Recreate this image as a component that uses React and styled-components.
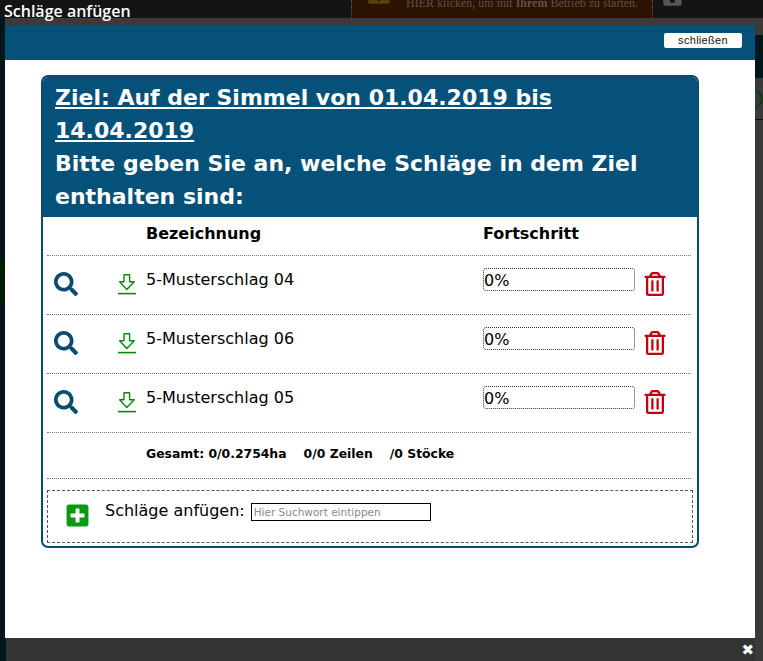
import React from 'react';
import styled, { createGlobalStyle } from 'styled-components';
import { FaSearch, FaRegTrashAlt, FaPlusSquare, FaExclamationTriangle, FaSave } from 'react-icons/fa';

const blue = '#05517a';
const navy = '#0a4c70';

const GlobalStyle = createGlobalStyle`
  html, body { margin: 0; padding: 0; background: #333; }
  body { font-family: "DejaVu Sans", Verdana, sans-serif; color: #000; }
  * { box-sizing: border-box; }
`;

const Page = styled.div`
  width: 763px;
  height: 661px;
  overflow: hidden;
  display: flex;
  flex-direction: column;
`;

const TopBar = styled.header`
  height: 18px;
  flex: none;
  background: #141414;
  display: flex;
  justify-content: space-between;
`;

const PageTitle = styled.div`
  position: relative;
  z-index: 2;
  font-family: "Open Sans", sans-serif;
  font-size: 16px;
  font-weight: 600;
  line-height: 22px;
  padding-left: 4px;
  color: #fff;
  white-space: nowrap;
`;

const Banner = styled.div`
  width: 302px;
  margin-left: auto;
  background: #2c1300;
  border-left: 1px dotted #5a5a5a;
  border-right: 1px dotted #5a5a5a;
  display: flex;
  gap: 16px;
  padding-left: 16px;
  overflow: hidden;
  color: #5f5147;
  font-family: "Liberation Serif", serif;
  font-size: 12px;
  line-height: 12px;
  white-space: nowrap;
  svg { flex: none; color: #54420a; margin-top: -17px; }
  b { font-weight: 700; }
`;

const BannerText = styled.span`
  margin-top: -3px;
`;

const BarTool = styled.div`
  width: 110px;
  flex: none;
  padding-left: 9px;
  overflow: hidden;
  color: #565656;
  svg { margin-top: -14px; display: block; }
`;

const Stage = styled.div`
  flex: 1;
  display: flex;
  min-height: 0;
`;

const LeftRail = styled.div`
  width: 5px;
  flex: none;
  background:
    repeating-linear-gradient(to bottom, transparent 0 52px, #2d3a40 52px 53px, transparent 53px 100%) 0 0 / 100% 47px,
    linear-gradient(to bottom, transparent 241px, #031c05 241px, #031c05 288px, transparent 288px),
    #02141c;
  background-repeat: repeat, no-repeat, no-repeat;
`;

const Middle = styled.div`
  width: 750px;
  flex: none;
  display: flex;
  flex-direction: column;
  background: #3a3a3a;
  padding-top: 7px;
`;

const Dialog = styled.div`
  height: 613px;
  flex: none;
  background: #fff;
  display: flex;
  flex-direction: column;
`;

const DialogHead = styled.div`
  height: 35px;
  flex: none;
  background: ${blue};
  display: flex;
  justify-content: flex-end;
  align-items: flex-start;
  padding: 8px 13px 0 0;
`;

const CloseButton = styled.button`
  width: 78px;
  height: 15px;
  padding: 0;
  border: 0;
  border-radius: 2px;
  background: #fff;
  color: #111;
  font-family: "Liberation Sans", sans-serif;
  font-size: 11px;
  letter-spacing: 0.3px;
  line-height: 15px;
`;

const DialogBody = styled.div`
  flex: 1;
  padding: 15px 56px 0 36px;
`;

const Card = styled.section`
  width: 658px;
  height: 473px;
  border: 2px solid ${navy};
  border-radius: 7px;
  overflow: hidden;
`;

const CardHead = styled.div`
  height: 140px;
  background: ${blue};
  color: #fff;
  padding: 4px 40px 0 12px;
  font-size: 22px;
  font-weight: 700;
  line-height: 33px;
`;

const TitleLink = styled.a`
  color: #fff;
  text-decoration: underline;
  display: block;
`;

const CardBody = styled.div`
  padding: 0 6px 0 4px;
`;

const Row = styled.div`
  display: grid;
  grid-template-columns: 71px 28px 337px 162px 46px;
  height: ${p => p.$h}px;
  border-bottom: 1px dotted #777;
  align-items: start;
`;

const HeadCell = styled.div`
  grid-column: ${p => p.$col};
  font-size: 16px;
  font-weight: 700;
  line-height: 20px;
  padding-top: 7px;
`;

const SearchCell = styled.div`
  color: ${navy};
  padding: 16px 0 0 7px;
  svg { display: block; }
`;

const DownloadCell = styled.div`
  padding-top: 18px;
  svg { display: block; }
`;

const Name = styled.div`
  font-size: 16px;
  line-height: 20px;
  padding-top: 14px;
  white-space: nowrap;
`;

const ProgressCell = styled.div`
  padding-top: 12px;
`;

const ProgressBox = styled.div`
  width: 152px;
  height: 23px;
  border: 1px dotted #333;
  border-radius: 3px;
  font-size: 16px;
  line-height: 23px;
`;

const TrashCell = styled.div`
  color: #c1000f;
  padding-top: 16px;
  svg { display: block; margin-left: -2px; }
`;

const Totals = styled.div`
  grid-column: 3 / 6;
  display: flex;
  gap: 17px;
  font-size: 12.4px;
  font-weight: 700;
  line-height: 18px;
  padding-top: 12px;
`;

const AddBox = styled.div`
  width: 646px;
  height: 53px;
  margin-top: 11px;
  border: 1px dashed #555;
  display: flex;
  align-items: flex-start;
  padding-left: 19px;
`;

const AddIcon = styled.div`
  color: #0a9a12;
  padding-top: 12px;
  width: 38px;
  flex: none;
  svg { display: block; margin-left: -2px; }
`;

const AddLabel = styled.label`
  font-size: 16px;
  line-height: 20px;
  padding-top: 10px;
  white-space: nowrap;
`;

const SearchInput = styled.input`
  width: 180px;
  height: 18px;
  margin: 12px 0 0 6px;
  padding: 0 2px;
  border: 1px solid #000;
  border-radius: 0;
  outline: 0;
  font-family: "DejaVu Sans", sans-serif;
  font-size: 10.5px;
  &::placeholder { color: #8a8a8a; opacity: 1; }
`;

const Foot = styled.div`
  flex: 1;
  background: #333;
  border-left: 1px solid #02141c;
  display: flex;
  justify-content: flex-end;
  align-items: center;
  padding: 0 1px 0 0;
  color: #fff;
  font-family: "DejaVu Sans", sans-serif;
  font-size: 15px;
`;

const RightRail = styled.div`
  width: 8px;
  flex: none;
  display: flex;
  flex-direction: column;
  background: #3a3a3a;
`;

const RailBlock = styled.div`
  height: ${p => p.$h}px;
  flex: none;
  background: ${p => p.$bg};
`;

const RailArc = styled.div`
  height: 42px;
  flex: none;
  color: #0f3d12;
  border-bottom: 1px solid #111;
  padding-top: 12px;
  svg { display: block; }
`;

const DownloadIcon = () => (
  <svg width="18" height="21" viewBox="0 0 18 21" fill="none" stroke="#0a8a10" strokeWidth="1.4" strokeLinejoin="round">
    <path d="M6 .8h5.6v7h4.6L8.8 15.4 1.6 7.8H6z" />
    <path d="M0 19.6h18" strokeWidth="1.6" />
  </svg>
);

const fields = ['5-Musterschlag 04', '5-Musterschlag 06', '5-Musterschlag 05'];

const App = () => (
  <Page>
    <GlobalStyle />
    <TopBar>
      <PageTitle>Schläge anfügen</PageTitle>
      <Banner>
        <FaExclamationTriangle size={22} />
        <BannerText>HIER klicken, um mit <b>Ihrem</b> Betrieb zu starten.</BannerText>
      </Banner>
      <BarTool><FaSave size={21} /></BarTool>
    </TopBar>
    <Stage>
      <LeftRail />
      <Middle>
        <Dialog>
          <DialogHead>
            <CloseButton>schließen</CloseButton>
          </DialogHead>
          <DialogBody>
            <Card>
              <CardHead>
                <TitleLink>Ziel: Auf der Simmel von 01.04.2019 bis 14.04.2019</TitleLink>
                Bitte geben Sie an, welche Schläge in dem Ziel enthalten sind:
              </CardHead>
              <CardBody>
                <Row $h={39}>
                  <HeadCell $col={3}>Bezeichnung</HeadCell>
                  <HeadCell $col={4}>Fortschritt</HeadCell>
                </Row>
                {fields.map(name => (
                  <Row $h={59} key={name}>
                    <SearchCell><FaSearch size={24} /></SearchCell>
                    <DownloadCell><DownloadIcon /></DownloadCell>
                    <Name>{name}</Name>
                    <ProgressCell><ProgressBox>0%</ProgressBox></ProgressCell>
                    <TrashCell><FaRegTrashAlt size={24} /></TrashCell>
                  </Row>
                ))}
                <Row $h={46}>
                  <Totals>
                    <span>Gesamt: 0/0.2754ha</span>
                    <span>0/0 Zeilen</span>
                    <span>/0 Stöcke</span>
                  </Totals>
                </Row>
                <AddBox>
                  <AddIcon><FaPlusSquare size={25} /></AddIcon>
                  <AddLabel>Schläge anfügen:</AddLabel>
                  <SearchInput placeholder="Hier Suchwort eintippen" />
                </AddBox>
              </CardBody>
            </Card>
          </DialogBody>
        </Dialog>
        <Foot>✖</Foot>
      </Middle>
      <RightRail>
        <RailBlock $h={17} $bg="#3a3a3a" />
        <RailBlock $h={43} $bg="#02141c" />
        <RailArc>
          <svg width="8" height="18" viewBox="0 0 8 18" fill="none" stroke="currentColor" strokeWidth="2">
            <path d="M1 1c4 2 6 5 6 8s-2 6-6 8" />
          </svg>
        </RailArc>
      </RightRail>
    </Stage>
  </Page>
);

export default App;
